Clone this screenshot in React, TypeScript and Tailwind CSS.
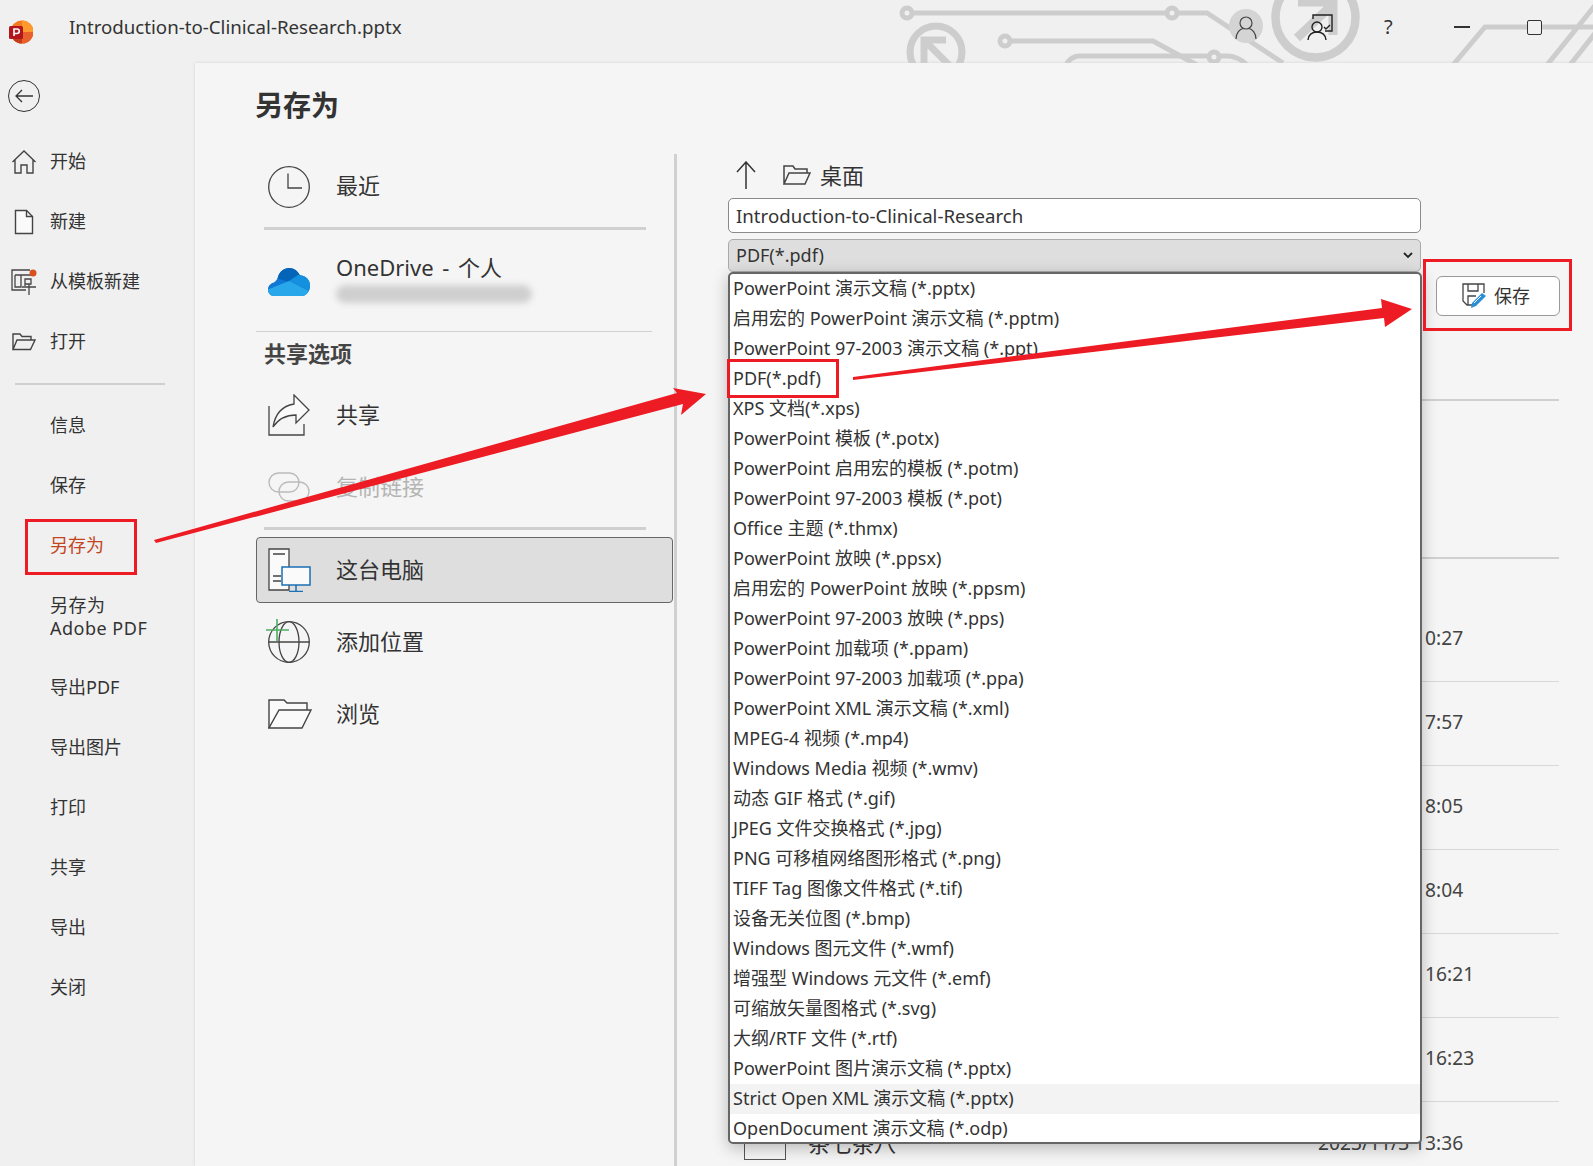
import type { ReactNode } from "react";

const cjk = `"Noto Sans", "Noto Sans CJK SC", sans-serif`;

const navTop = [
  { label: "开始", icon: <HomeIcon /> },
  { label: "新建", icon: <NewIcon /> },
  { label: "从模板新建", icon: <TemplateIcon /> },
  { label: "打开", icon: <OpenIcon /> },
];

const navBottom = ["信息", "保存", "另存为", "另存为\nAdobe PDF", "导出PDF", "导出图片", "打印", "共享", "导出", "关闭"];

const formats = [
  "PowerPoint 演示文稿 (*.pptx)",
  "启用宏的 PowerPoint 演示文稿 (*.pptm)",
  "PowerPoint 97-2003 演示文稿 (*.ppt)",
  "PDF(*.pdf)",
  "XPS 文档(*.xps)",
  "PowerPoint 模板 (*.potx)",
  "PowerPoint 启用宏的模板 (*.potm)",
  "PowerPoint 97-2003 模板 (*.pot)",
  "Office 主题 (*.thmx)",
  "PowerPoint 放映 (*.ppsx)",
  "启用宏的 PowerPoint 放映 (*.ppsm)",
  "PowerPoint 97-2003 放映 (*.pps)",
  "PowerPoint 加载项 (*.ppam)",
  "PowerPoint 97-2003 加载项 (*.ppa)",
  "PowerPoint XML 演示文稿 (*.xml)",
  "MPEG-4 视频 (*.mp4)",
  "Windows Media 视频 (*.wmv)",
  "动态 GIF 格式 (*.gif)",
  "JPEG 文件交换格式 (*.jpg)",
  "PNG 可移植网络图形格式 (*.png)",
  "TIFF Tag 图像文件格式 (*.tif)",
  "设备无关位图 (*.bmp)",
  "Windows 图元文件 (*.wmf)",
  "增强型 Windows 元文件 (*.emf)",
  "可缩放矢量图格式 (*.svg)",
  "大纲/RTF 文件 (*.rtf)",
  "PowerPoint 图片演示文稿 (*.pptx)",
  "Strict Open XML 演示文稿 (*.pptx)",
  "OpenDocument 演示文稿 (*.odp)",
];

const dates = [
  "2023/11/3 10:27",
  "2023/11/3 17:57",
  "2023/11/3 18:05",
  "2023/11/3 18:04",
  "2023/11/13 16:21",
  "2023/11/13 16:23",
];

function HomeIcon() {
  return (
    <svg width="26" height="26" viewBox="0 0 26 26" fill="none" stroke="#444" strokeWidth="1.4">
      <path d="M1.5 13 13 2l11.5 11M4 11v13h6v-8h6v8h6V11" />
    </svg>
  );
}

function NewIcon() {
  return (
    <svg width="20" height="26" viewBox="0 0 20 26" fill="#fafafa" stroke="#444" strokeWidth="1.4">
      <path d="M1.5 1.5h11l6 6v17h-17z" />
      <path d="M12.5 1.5v6h6" fill="none" />
    </svg>
  );
}

function TemplateIcon() {
  return (
    <svg width="26" height="26" viewBox="0 0 26 26" fill="none" stroke="#444" strokeWidth="1.3">
      <path d="M19 1H1v20h14M4 6h17M4 6v12h6V6M14 10h6v5h-6zM14 10v7M11 18h14M18 15v11" />
      <circle cx="22" cy="4" r="3.5" fill="#d8501f" stroke="none" />
    </svg>
  );
}

function OpenIcon() {
  return (
    <svg width="24" height="18" viewBox="0 0 24 18" fill="none" stroke="#444" strokeWidth="1.4">
      <path d="M1 16.5V1h7l2 2.5h9V7M1 16.5h17.5L23 7H5z" />
    </svg>
  );
}

function ClockIcon() {
  return (
    <svg width="42" height="42" viewBox="0 0 42 42" fill="none" stroke="#444" strokeWidth="1.3">
      <circle cx="21" cy="21" r="20.3" />
      <path d="M20 7.5V22h14" />
    </svg>
  );
}

function CloudIcon() {
  const outline =
    "M6 28C2 28 0 25 0 21.500 0 17.500 3 15 6 14.500 8 13 9.500 11 10 9 11.500 3.500 16 0 21 0c5 0 9 3 11 7.500 6 0 10 4.500 10 10 0 6-4 10.500-8 10.500z";
  return (
    <svg width="42" height="28" viewBox="0 0 42 28">
      <clipPath id="cloud-shape">
        <path d={outline} />
      </clipPath>
      <g clipPath="url(#cloud-shape)">
        <rect width="42" height="28" fill="#0f78d4" />
        <path d="M8-1h26l2 9-15 6-13-4z" fill="#0364b8" />
        <path d="M21 13 30 7l14 0v17z" fill="#1490df" />
        <path d="M-1 22 21 13l22 11v5H-1z" fill="#28a8ea" />
      </g>
    </svg>
  );
}

function ShareIcon() {
  return (
    <svg width="42" height="42" viewBox="0 0 42 42" fill="none" stroke="#444" strokeWidth="1.3">
      <path d="M1 12v29h35V30" />
      <path d="M26 1l15 15-13 13v-8C18 21 11 24 5 33c2-12 9-21 21-23z" fill="#fafafa" />
    </svg>
  );
}

function LinkIcon() {
  return (
    <svg width="42" height="30" viewBox="0 0 42 30" fill="none" stroke="#bbb" strokeWidth="1.4">
      <rect x="1" y="1" width="30" height="19" rx="9.500" />
      <rect x="11" y="10" width="30" height="19" rx="9.500" />
    </svg>
  );
}

function PcIcon() {
  return (
    <svg width="44" height="44" viewBox="0 0 44 44" fill="none">
      <path d="M1 1h20v41H1z" fill="#fafafa" stroke="#444" strokeWidth="1.3" />
      <path d="M5 6h12M5 28h8M5 33h8" stroke="#444" strokeWidth="1.3" />
      <path d="M14 19h28v18H14z" fill="#fafafa" stroke="#1a6fb5" strokeWidth="1.5" />
      <path d="M28 37v6M21 43.500h14" stroke="#1a6fb5" strokeWidth="1.5" />
    </svg>
  );
}

function GlobeIcon() {
  return (
    <svg className="-ml-[3px]" width="46" height="46" viewBox="0 0 46 46" fill="none">
      <g stroke="#444" strokeWidth="1.3">
        <circle cx="24" cy="23" r="20.3" />
        <ellipse cx="24" cy="23" rx="10" ry="20.3" />
        <path d="M3.700 23h40.600" />
      </g>
      <path d="M12 0v22M1 11h23" stroke="#4caf63" strokeWidth="1.6" />
    </svg>
  );
}

function BrowseIcon() {
  return (
    <svg width="44" height="30" viewBox="0 0 44 30" fill="none" stroke="#444" strokeWidth="1.4">
      <path d="M1 29V1h15l3 3h20v7" fill="#fafafa" />
      <path d="M1 29h33l9-18H11z" fill="#fafafa" />
    </svg>
  );
}

function SaveIcon() {
  return (
    <svg width="26" height="26" viewBox="0 0 26 26" fill="none">
      <path d="M14 22H6l-4-4V1h21v9" stroke="#444" strokeWidth="1.3" />
      <path d="M7 1v7h10V1M7 22v-9h8" stroke="#444" strokeWidth="1.3" />
      <path d="M10 25l1-5L21 10l4 3-10 10z" fill="#2b8fd6" />
      <path d="M13 20l7-7" stroke="#fff" strokeWidth="1" />
    </svg>
  );
}

function LogoIcon() {
  return (
    <svg width="24" height="24" viewBox="0 0 24 24">
      <circle cx="13" cy="12" r="11.500" fill="#f47a22" />
      <path d="M13 .5A11.500 11.500 0 0 1 24.500 12H13z" fill="#ff9a2e" />
      <path d="M13 12h11.500A11.500 11.500 0 0 1 13 23.500z" fill="#e8602c" />
      <path d="M13 12H1.500A11.500 11.500 0 0 0 13 23.500z" fill="#c43e1c" />
      <rect x="0" y="6" width="14" height="13" rx="1.500" fill="#b3151d" />
      <path d="M5 16V9h3a2.200 2.200 0 0 1 0 4.500H5" fill="none" stroke="#fff" strokeWidth="1.600" />
    </svg>
  );
}

function Rule({ className }: { className: string }) {
  return <div className={`h-[3px] bg-[#d0d0d0] ${className}`} />;
}

function PlaceRow({ icon, label, muted }: { icon: ReactNode; label: string; muted?: boolean }) {
  return (
    <div className="flex h-[72px] items-center">
      <div className="w-[80px] shrink-0 pl-[12px]">{icon}</div>
      <span className={`pb-[1px] text-[22px] ${muted ? "text-[#b4b4b4]" : "text-[#333]"}`}>{label}</span>
    </div>
  );
}

function CircuitArt() {
  return (
    <svg className="absolute right-0 top-0" width="713" height="63" viewBox="880 0 713 63" fill="none" stroke="#cdcdcd" strokeWidth="5">
      <circle cx="907" cy="13" r="5" />
      <path d="M912 13h255" />
      <circle cx="1172" cy="13" r="5" />
      <path d="M1177 13h30l76 50" />
      <circle cx="936" cy="52" r="26" strokeWidth="7" />
      <path d="M924 65V40h22M926 42l24 24" strokeWidth="7" />
      <circle cx="1005" cy="41" r="5" />
      <path d="M1010 41h143l44 24" />
      <path d="M1066 65c3-6 8-9 14-9h129" />
      <circle cx="1214" cy="57" r="5" />
      <path d="M1219 56h8c8 0 14 3 20 9" />
      <circle cx="1246" cy="26" r="17" fill="#d4d4d4" stroke="none" />
      <circle cx="1315.500" cy="17.500" r="40" strokeWidth="8.500" />
      <path d="M1298 2h35v33M1333 4l-36 34" strokeWidth="9" />
      <path d="M1453 65l32-38h108M1547 65l50-62M1570 65l30-38" />
    </svg>
  );
}

function TitleBar() {
  return (
    <div className="relative flex h-[63px] shrink-0 items-center overflow-hidden pb-[9px]">
      <CircuitArt />
      <div className="relative ml-[9px] mt-[9px] flex h-[24px] w-[24px]">
        <LogoIcon />
      </div>
      <span className="relative ml-[36px] text-[18.700px] text-[#333]">Introduction-to-Clinical-Research.pptx</span>
      <div className="absolute right-[51px] top-[13px] flex items-center text-[#333]">
        <svg width="22" height="24" viewBox="0 0 22 24" fill="none" stroke="#444" strokeWidth="1.200">
          <circle cx="11" cy="8" r="6" />
          <path d="M1 24c0-6 4-10 7-10.500M21 24c0-6-4-10-7-10.500" />
        </svg>
        <svg className="ml-[50px]" width="26" height="26" viewBox="0 0 26 26" fill="none" stroke="#222" strokeWidth="1.400">
          <path d="M6 5V1h19v16h-7" />
          <circle cx="10" cy="13" r="5" />
          <path d="M1 26c0-5 4-8 9-8s9 3 9 8M17 13l2 2 4-4" />
        </svg>
        <span className="ml-[51px] w-[12px] text-[20px] leading-[28px]">?</span>
        <div className="ml-[58px] h-[1.500px] w-[16px] bg-[#333]" />
        <div className="ml-[57px] h-[15px] w-[15px] rounded-[2px] border-[1.500px] border-[#333] bg-[#f0f0f0]" />
      </div>
    </div>
  );
}

function Sidebar() {
  return (
    <aside className="w-[195px] shrink-0 pt-[17px]">
      <div className="ml-[8px] flex h-[32px] w-[32px] items-center justify-center rounded-full border-[1.500px] border-[#333]">
        <svg width="18" height="14" viewBox="0 0 18 14" fill="none" stroke="#333" strokeWidth="1.300">
          <path d="M18 7H1M7 1 1 7l6 6" />
        </svg>
      </div>
      <div className="mt-[20px]">
        {navTop.map((item) => (
          <div key={item.label} className="flex h-[60px] items-center">
            <div className="flex w-[50px] shrink-0 justify-center pr-[2px]">{item.icon}</div>
            <span className="pb-[1px] text-[18px] text-[#333]">{item.label}</span>
          </div>
        ))}
      </div>
      <div className="ml-[15px] mt-[11px] h-[2px] w-[150px] bg-[#cfcfcf]" />
      <div className="mt-[11px] pl-[50px]">
        {navBottom.map((label) => (
          <div
            key={label}
            className={`flex items-center whitespace-pre-line pb-[1px] text-[18px] leading-[23px] ${
              label === "另存为" ? "text-[#c4441f]" : "text-[#333]"
            } ${label.includes("Adobe") ? "h-[82px] tracking-[0.500px]" : "h-[60px]"}`}
          >
            {label}
          </div>
        ))}
      </div>
    </aside>
  );
}

function PlacesColumn() {
  return (
    <div className="w-[418px] shrink-0">
      <div className="flex h-[75px] items-center pb-[6px]">
        <div className="w-[80px] shrink-0 pl-[12px]">
          <ClockIcon />
        </div>
        <span className="pb-[2px] text-[22px] text-[#333]">最近</span>
      </div>
      <Rule className="ml-[8px] w-[382px]" />
      <div className="flex h-[101px] items-center pb-[6px]">
        <div className="w-[80px] shrink-0 pl-[12px] pt-[8px]">
          <CloudIcon />
        </div>
        <div>
          <div className="text-[22px] leading-[30px] text-[#333] [word-spacing:3px]">OneDrive - 个人</div>
          <div className="mt-[3px] h-[18px] w-[196px] rounded-full bg-[#cfcfcf] blur-[3px]" />
        </div>
      </div>
      <div className="h-px w-[396px] bg-[#d0d0d0]" />
      <div className="flex h-[43px] items-center pl-[8px] text-[22px] font-bold text-[#444]">共享选项</div>
      <div className="mt-[4px]">
        <PlaceRow icon={<ShareIcon />} label="共享" />
        <PlaceRow icon={<LinkIcon />} label="复制链接" muted />
      </div>
      <Rule className="ml-[8px] mt-[4px] w-[382px]" />
      <div className="mt-[7px] flex h-[66px] w-[417px] items-center rounded-[4px] border border-[#666] bg-[#dedede]">
        <div className="w-[79px] shrink-0 pl-[11px]">
          <PcIcon />
        </div>
        <span className="pb-[1px] text-[22px] text-[#333]">这台电脑</span>
      </div>
      <div className="mt-[3px]">
        <PlaceRow icon={<GlobeIcon />} label="添加位置" />
        <PlaceRow icon={<BrowseIcon />} label="浏览" />
      </div>
    </div>
  );
}

function FileRows() {
  return (
    <div className="absolute left-[51px] top-[247px] w-[831px] text-[19.200px] text-[#444]">
      <div className="h-[2px] bg-[#d0d0d0]" />
      <div className="mt-[156px] h-[2px] bg-[#d0d0d0]" />
      <div className="mt-[39px]">
        {dates.map((date) => (
          <div key={date} className="flex h-[84px] items-center border-b border-[#d8d8d8] pb-[2px] pl-[590px]">
            {date}
          </div>
        ))}
      </div>
      <div className="flex h-[58px] items-start pl-[16px] pt-[26px]">
        <div className="h-[32px] w-[42px] shrink-0 border-[1.500px] border-[#555]" />
        <span className="ml-[22px] w-[510px] shrink-0 text-[22px] leading-[30px] text-[#333]">茶七茶八</span>
        <span className="leading-[30px]">2023/11/3 13:36</span>
      </div>
    </div>
  );
}

function SaveColumn() {
  return (
    <div className="relative flex-1">
      <FileRows />
      <div className="ml-[59px] flex h-[44px] items-center pt-[2px]">
        <svg width="20" height="28" viewBox="0 0 20 28" fill="none" stroke="#333" strokeWidth="1.500">
          <path d="M10 28V1M1 11 10 1l9 10" />
        </svg>
        <svg className="ml-[27px]" width="28" height="20" viewBox="0 0 28 20" fill="none" stroke="#444" strokeWidth="1.500">
          <path d="M1 19V1h9l2 3h12v4M1 19h21l5-11H6z" />
        </svg>
        <span className="ml-[9px] text-[22px] text-[#333]">桌面</span>
      </div>
      <div className="relative z-10 ml-[51px] mt-[2px] flex h-[35px] w-[693px] items-center rounded-[5px] border border-[#8a8a8a] bg-white pl-[7px] pt-[1px] text-[18.650px] text-[#333]">
        Introduction-to-Clinical-Research
      </div>
      <div className="relative z-10 ml-[51px] mt-[6px] flex h-[33px] w-[693px] items-center justify-between rounded-[5px] border border-[#aaa] bg-[#dedede] px-[7px] text-[18px] text-[#333]">
        PDF(*.pdf)
        <svg width="10" height="7" viewBox="0 0 10 7" fill="none" stroke="#222" strokeWidth="1.800">
          <path d="m1 1 4 4 4-4" />
        </svg>
      </div>
      <div className="relative z-10 ml-[51px] h-[872px] w-[694px] overflow-hidden rounded-[5px] border-2 border-[#666] bg-white text-[18px] text-[#333] shadow-[0_4px_16px_rgba(0,0,0,0.25)]">
        {formats.map((format) => (
          <div key={format} className={`flex h-[30px] items-center pb-[2px] pl-[3px] ${format.startsWith("Strict") ? "bg-[#f3f3f3]" : ""}`}>
            {format}
          </div>
        ))}
      </div>
      <div className="absolute left-[759px] top-[124px] z-10 flex h-[40px] w-[124px] items-center justify-center rounded-[6px] border border-[#999] bg-white pr-[5px]">
        <SaveIcon />
        <span className="ml-[7px] text-[18px] text-[#333]">保存</span>
      </div>
    </div>
  );
}

function Annotations() {
  return (
    <>
      <div className="absolute left-[25px] top-[519px] z-20 h-[56px] w-[112px] border-[3px] border-[#ed1c24]" />
      <div className="absolute left-[727px] top-[359px] z-20 h-[39px] w-[112px] border-[3px] border-[#ed1c24]" />
      <div className="absolute left-[1423px] top-[259px] z-20 h-[72px] w-[149px] border-[3px] border-[#ed1c24]" />
      <svg className="absolute left-0 top-0 z-20" width="1593" height="1166" viewBox="0 0 1593 1166" fill="#ed1c24">
        <path d="M154 540 677 393l-4-5 33 6-25 21 2-11-527 139z" />
        <path d="M853 377 1382 308l-1-9 31 10-27 18-1-9-531 62z" />
      </svg>
    </>
  );
}

export default function App() {
  return (
    <div className="relative flex h-[1166px] w-[1593px] flex-col overflow-hidden bg-[#f0f0f0]" style={{ fontFamily: cjk }}>
      <TitleBar />
      <div className="flex min-h-0 flex-1">
        <Sidebar />
        <main className="flex min-w-0 flex-1 flex-col bg-[#f5f5f5] shadow-[0_0_3px_rgba(0,0,0,0.12)]">
          <h1 className="ml-[60px] mt-[23px] h-[38px] text-[28px] font-bold leading-[38px] text-[#333]">另存为</h1>
          <div className="ml-[61px] mt-[28px] flex flex-1">
            <PlacesColumn />
            <div className="mt-[2px] w-[3px] shrink-0 bg-[#d0d0d0]" />
            <SaveColumn />
          </div>
        </main>
      </div>
      <Annotations />
    </div>
  );
}
